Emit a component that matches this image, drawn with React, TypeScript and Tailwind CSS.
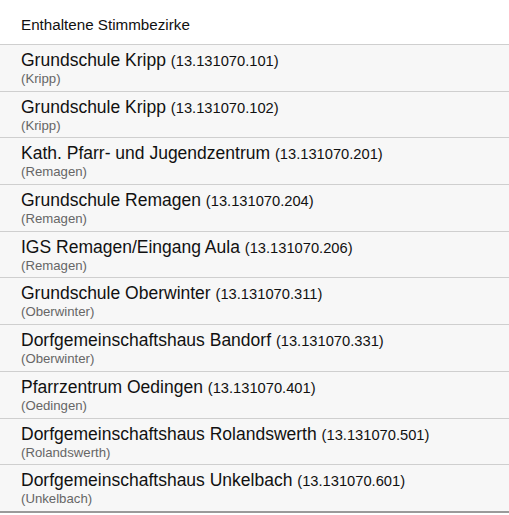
const districts = [
  { name: "Grundschule Kripp", code: "13.131070.101", place: "Kripp" },
  { name: "Grundschule Kripp", code: "13.131070.102", place: "Kripp" },
  { name: "Kath. Pfarr- und Jugendzentrum", code: "13.131070.201", place: "Remagen" },
  { name: "Grundschule Remagen", code: "13.131070.204", place: "Remagen" },
  { name: "IGS Remagen/Eingang Aula", code: "13.131070.206", place: "Remagen" },
  { name: "Grundschule Oberwinter", code: "13.131070.311", place: "Oberwinter" },
  { name: "Dorfgemeinschaftshaus Bandorf", code: "13.131070.331", place: "Oberwinter" },
  { name: "Pfarrzentrum Oedingen", code: "13.131070.401", place: "Oedingen" },
  { name: "Dorfgemeinschaftshaus Rolandswerth", code: "13.131070.501", place: "Rolandswerth" },
  { name: "Dorfgemeinschaftshaus Unkelbach", code: "13.131070.601", place: "Unkelbach" },
];

const App = () => {
  return (
    <div className="w-[509px] bg-white font-['Liberation_Sans',Arial,sans-serif] text-[#111]">
      <div className="h-[44px] pl-[21px] pt-[16px]">
        <h2 className="text-[15.2px] leading-[18px] font-normal">Enthaltene Stimmbezirke</h2>
      </div>
      <ul className="border-b-2 border-[#9a9a9a]">
        {districts.map((d, i) => (
          <li
            key={i}
            className="h-[46.7px] box-border border-t border-[#cfcfcf] bg-[#f7f7f7] pl-[21px] pt-[5px]"
          >
            <div className="text-[17.5px] leading-[20px] whitespace-nowrap">
              {d.name} <span className="text-[14.7px]">({d.code})</span>
            </div>
            <div className="text-[13.2px] leading-[15px] text-[#666]">({d.place})</div>
          </li>
        ))}
      </ul>
    </div>
  );
};

export default App;
